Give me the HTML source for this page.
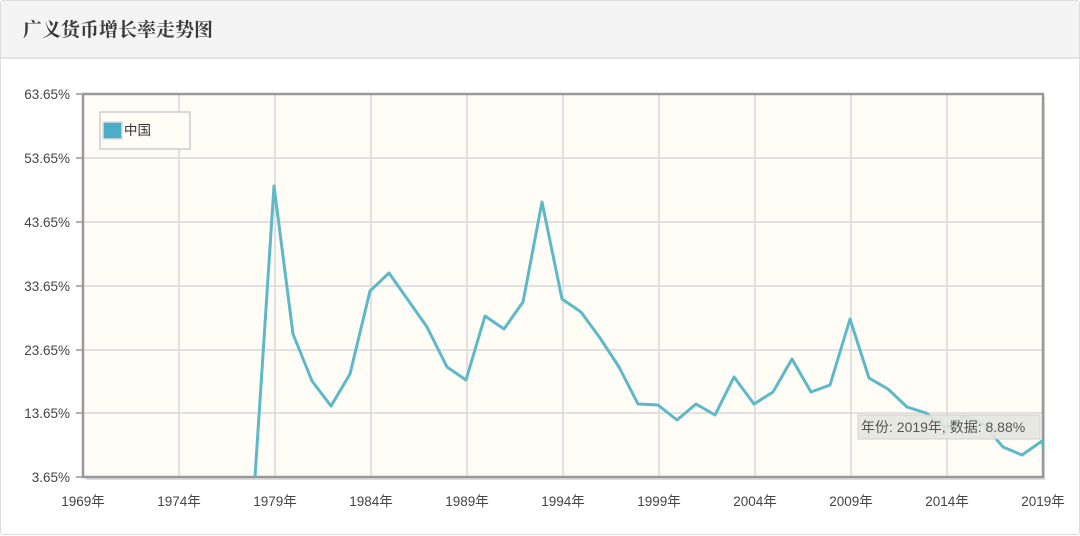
<!DOCTYPE html>
<html><head><meta charset="utf-8"><style>
body{margin:0;background:#fff;width:1080px;height:536px;overflow:hidden;font-family:"Liberation Sans","Noto Sans CJK SC",sans-serif;}
.card{position:absolute;left:0;top:0;width:1078px;height:533px;border:1px solid #ddd;border-radius:3px;}
.hd{height:56px;background:#f4f4f4;border-bottom:2px solid #e2e2e2;}
.hd span{position:absolute;left:22px;top:14px;font-size:19px;font-weight:bold;color:#3a3a3a;font-family:"Noto Serif CJK SC","Noto Sans CJK SC",serif;}
</style></head><body>
<div class="card"><div class="hd"><span>广义货币增长率走势图</span></div></div>
<svg width="1080" height="536" style="position:absolute;left:0;top:0" font-family="Liberation Sans,Noto Sans CJK SC,sans-serif">
<defs><clipPath id="c"><rect x="83" y="94" width="960" height="383"/></clipPath></defs>
<rect x="86" y="97" width="959" height="383" fill="#bbb" opacity=".5"/>
<rect x="83" y="94" width="960" height="383" fill="#fffdf6"/>
<g stroke="#d8d8d8" stroke-width="1.5">
<line x1="179" y1="94" x2="179" y2="477"/><line x1="275" y1="94" x2="275" y2="477"/><line x1="371" y1="94" x2="371" y2="477"/><line x1="467" y1="94" x2="467" y2="477"/><line x1="563" y1="94" x2="563" y2="477"/><line x1="659" y1="94" x2="659" y2="477"/><line x1="755" y1="94" x2="755" y2="477"/><line x1="851" y1="94" x2="851" y2="477"/><line x1="947" y1="94" x2="947" y2="477"/>
<line x1="83" y1="158" x2="1043" y2="158"/><line x1="83" y1="222" x2="1043" y2="222"/><line x1="83" y1="286" x2="1043" y2="286"/><line x1="83" y1="350" x2="1043" y2="350"/><line x1="83" y1="413" x2="1043" y2="413"/>
</g>
<rect x="83" y="94" width="960" height="383" fill="none" stroke="#999" stroke-width="2.5"/>
<g stroke="#999" stroke-width="1.5">
<line x1="76" y1="94" x2="83" y2="94"/><line x1="76" y1="158" x2="83" y2="158"/><line x1="76" y1="222" x2="83" y2="222"/><line x1="76" y1="286" x2="83" y2="286"/><line x1="76" y1="350" x2="83" y2="350"/><line x1="76" y1="413" x2="83" y2="413"/><line x1="76" y1="477" x2="83" y2="477"/>
</g>
<polyline clip-path="url(#c)" fill="none" stroke="#5db8c8" stroke-width="3" stroke-linejoin="round" points="250,520 255,477 274,186 293,334 312,381 331,406 350,374 370,291 389,273 408,300 427,327 447,367 466,380 485,316 504,329 523,302 542,202 562,299 581,312 600,338 619,367 638,404 658,405 677,420 696,404 715,415 734,377 754,404 773,392 792,359 811,392 830,385 850,319 869,378 888,389 907,407 926,413 946,428 965,416 984,425 1003,447 1022,455 1042,441 1046,458"/>
<g font-size="13.5" fill="#444" text-anchor="end">
<text x="70" y="99">63.65%</text><text x="70" y="163">53.65%</text><text x="70" y="227">43.65%</text><text x="70" y="291">33.65%</text><text x="70" y="355">23.65%</text><text x="70" y="418">13.65%</text><text x="70" y="482">3.65%</text>
</g>
<g font-size="13.5" fill="#444" text-anchor="middle">
<text x="83" y="506">1969年</text><text x="179" y="506">1974年</text><text x="275" y="506">1979年</text><text x="371" y="506">1984年</text><text x="467" y="506">1989年</text><text x="563" y="506">1994年</text><text x="659" y="506">1999年</text><text x="755" y="506">2004年</text><text x="851" y="506">2009年</text><text x="947" y="506">2014年</text><text x="1043" y="506">2019年</text>
</g>
<rect x="100" y="112" width="90" height="37" fill="#fffdf6" stroke="#ccc" stroke-width="1.5"/>
<rect x="103" y="122" width="19" height="17" fill="#4aafc6" stroke="#ddd" stroke-width="1.5"/>
<text x="124" y="135" font-size="13.5" fill="#333">中国</text>
<rect x="858" y="415" width="182" height="24" fill="#e6e6e2" stroke="#ccc" opacity=".9"/>
<text x="861" y="432" font-size="14" fill="#555">年份: 2019年, 数据: 8.88%</text>
</svg>
</body></html>
